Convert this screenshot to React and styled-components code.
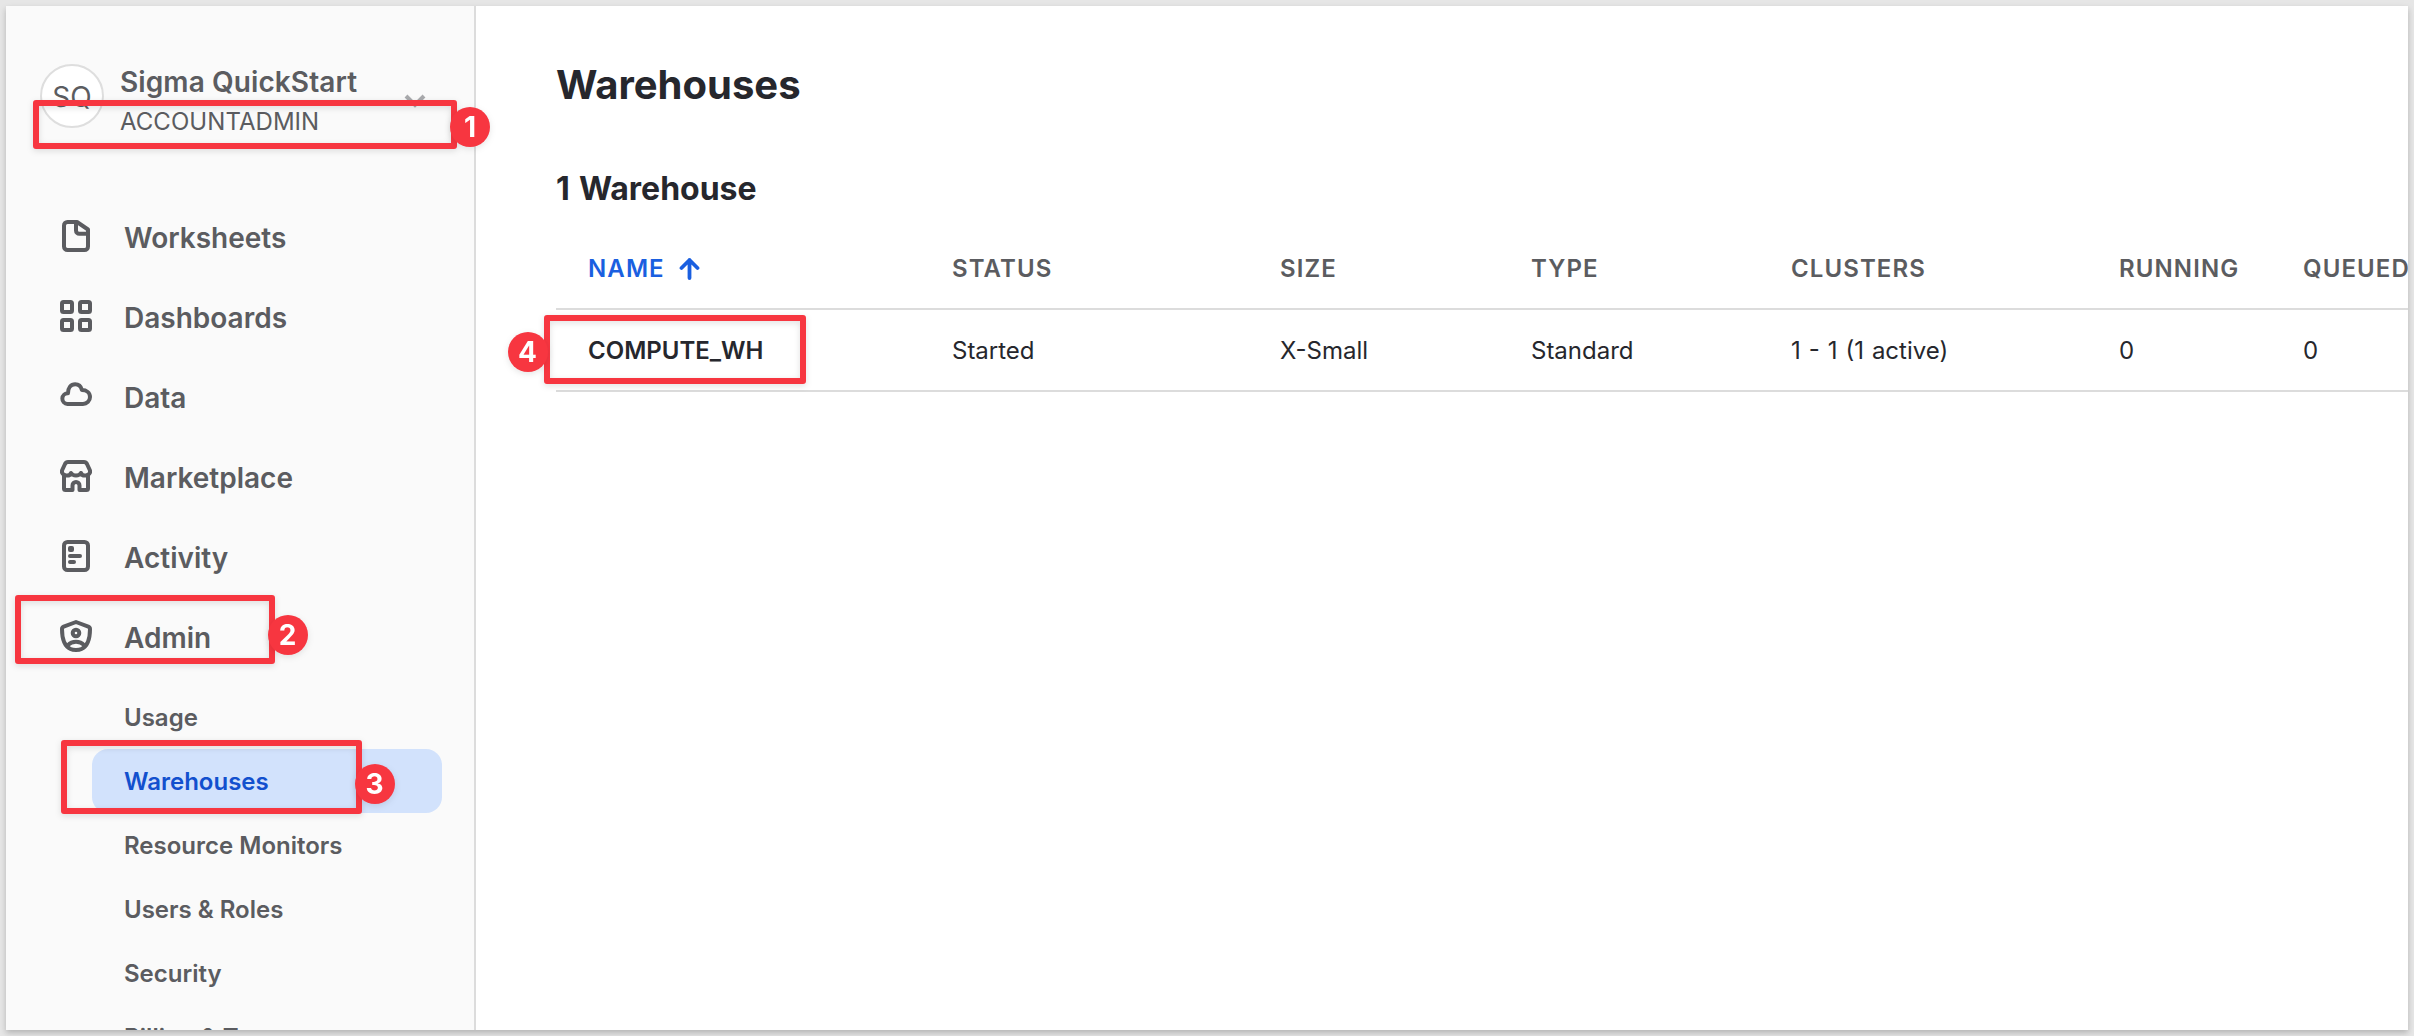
import React from "react";
import styled, { createGlobalStyle } from "styled-components";

const GlobalStyle = createGlobalStyle`
  * { box-sizing: border-box; }
  body { margin: 0; background: #e6e6e6; }
`;

const Stage = styled.div`
  position: relative;
  width: 2414px;
  height: 1036px;
  padding: 6px;
  overflow: hidden;
  background: #e6e6e6;
  font-family: Inter, "Liberation Sans", sans-serif;
`;

const Window = styled.div`
  display: flex;
  height: 1024px;
  overflow: hidden;
  background: #fff;
`;

const Shade = styled.div`
  height: 1024px;
  box-shadow: 0 3px 6px rgba(0, 0, 0, 0.22);
`;

const Sidebar = styled.aside`
  flex: none;
  width: 470px;
  height: 1024px;
  overflow: hidden;
  background: #fafafa;
  border-right: 2px solid #dcdcdc;
`;

const Account = styled.div`
  display: flex;
  align-items: center;
  height: 64px;
  margin: 58px 48px 0 34px;
`;

const Avatar = styled.div`
  display: flex;
  align-items: center;
  justify-content: center;
  width: 64px;
  height: 64px;
  padding-top: 2px;
  border: 2px solid #dedede;
  border-radius: 50%;
  background: #fff;
  color: #5b5c60;
  font-size: 28px;
`;

const AccountText = styled.div`
  flex: 1;
  margin-left: 16px;
  padding-top: 12px;
  color: #5b5c60;
  white-space: nowrap;
`;

const AccountName = styled.div`
  font-size: 28px;
  line-height: 40px;
  font-weight: 600;
  letter-spacing: 0.1px;
`;

const AccountRole = styled.div`
  font-size: 24px;
  line-height: 40px;
  letter-spacing: 0.05px;
`;

const Nav = styled.nav`
  display: flex;
  flex-direction: column;
  padding-top: 69px;
`;

const NavItem = styled.div`
  display: flex;
  align-items: center;
  gap: 32px;
  height: 80px;
  padding: 1px 0 0 54px;
  color: #5b5c60;
  font-size: 28px;
  line-height: 36px;
  font-weight: 600;

  svg { margin-top: -3px; }
`;

const SubNav = styled.div`
  display: flex;
  flex-direction: column;
  margin: 8px 32px 0 86px;
`;

const SubItem = styled.div`
  flex: none;
  height: 64px;
  padding-left: 32px;
  border-radius: 16px;
  background: ${(p) => (p.$active ? "#d2e2fc" : "transparent")};
  color: ${(p) => (p.$active ? "#1250ce" : "#5b5c60")};
  font-size: 24px;
  line-height: 66px;
  font-weight: 600;
  white-space: nowrap;
`;

const Main = styled.main`
  flex: 1;
  min-width: 0;
  overflow: hidden;
  padding-left: 80px;
  color: #26272d;
`;

const Title = styled.h1`
  margin: 54px 0 0;
  font-size: 40px;
  line-height: 50px;
  font-weight: 700;
`;

const Subtitle = styled.h2`
  margin: 59px 0 0;
  font-size: 32px;
  line-height: 40px;
  font-weight: 700;
  word-spacing: 1.5px;
`;

const Row = styled.div`
  display: grid;
  grid-template-columns: 364px 328px 251px 260px 328px 184px 200px;
  align-items: center;
  width: 1948px;
  height: ${(p) => p.$height}px;
  padding: ${(p) => p.$top}px 0 0 32px;
  border-bottom: 2px solid #dcdcdc;
  white-space: nowrap;
`;

const HeadCell = styled.div`
  display: flex;
  align-items: center;
  gap: 14px;
  color: ${(p) => (p.$sorted ? "#1a5fe0" : "#5b5c60")};
  font-size: 24px;
  line-height: 32px;
  font-weight: 600;
  letter-spacing: 1.1px;
`;

const Cell = styled.div`
  font-size: 24px;
  line-height: 32px;
  font-weight: ${(p) => (p.$strong ? 600 : 400)};
  word-spacing: 1.2px;
`;

const HighlightBox = styled.div`
  position: absolute;
  left: ${(p) => p.$x}px;
  top: ${(p) => p.$y}px;
  width: ${(p) => p.$w}px;
  height: ${(p) => p.$h}px;
  border: 6px solid #f73640;
  border-radius: 3px;
  filter: drop-shadow(0 2px 3px rgba(0, 0, 0, 0.12));
`;

const StepBadge = styled.div`
  position: absolute;
  left: ${(p) => p.$x}px;
  top: ${(p) => p.$y}px;
  display: flex;
  align-items: center;
  justify-content: center;
  width: 40px;
  height: 40px;
  border-radius: 50%;
  background: #f73640;
  color: #fff;
  font-size: 28px;
  line-height: 40px;
  font-weight: 700;
  filter: drop-shadow(0 2px 3px rgba(0, 0, 0, 0.1));
`;

const Icon = ({ children }) => (
  <svg width="32" height="32" viewBox="0 0 32 32" fill="none" stroke="currentColor"
    strokeWidth="4" strokeLinecap="round" strokeLinejoin="round">
    {children}
  </svg>
);

const FileIcon = () => (
  <Icon>
    <path d="M7.5 2H17L28 9.5V26.5A3.5 3.5 0 0 1 24.5 30H7.5A3.5 3.5 0 0 1 4 26.5V5.5A3.5 3.5 0 0 1 7.5 2Z" />
    <path d="M16 3V10.5A3.3 3.3 0 0 0 19.3 13.8H27" />
  </Icon>
);

const GridIcon = () => (
  <Icon>
    <rect x="2" y="2" width="10" height="10" rx="1.5" />
    <rect x="20" y="2" width="10" height="10" rx="1.5" />
    <rect x="2" y="20" width="10" height="10" rx="1.5" />
    <rect x="20" y="20" width="10" height="10" rx="1.5" />
  </Icon>
);

const CloudIcon = () => (
  <Icon>
    <path d="M7.5 24A5.4 5.4 0 0 1 8 13.2C8 8 10.8 4.3 15.2 4.3C18.7 4.3 21 6.6 21.9 10C26.5 10 30 12.8 30 17A7 7 0 0 1 23 24Z" />
  </Icon>
);

const StoreIcon = () => (
  <Icon>
    <path d="M8 2H24Q26 2 27 4L30 10.5V12.5Q29 15 26 15.5Q22 16 21 13Q19.5 15.5 16 15.5Q12.5 15.5 11 13Q10 16 6 15.5Q3 15 2 12.5V10.5L5 4Q6 2 8 2Z" />
    <path d="M4 15V28.5Q4 30 5.5 30H12.5V25.5A3.5 3.5 0 0 1 19.5 25.5V30H26.5Q28 30 28 28.5V15" />
  </Icon>
);

const ActivityIcon = () => (
  <Icon>
    <rect x="4" y="2" width="24" height="28" rx="3.5" />
    <rect x="8" y="6" width="6" height="6" rx="2" fill="currentColor" stroke="none" />
    <path d="M10 16H20M10 22H14" />
  </Icon>
);

const ShieldIcon = () => (
  <Icon>
    <path d="M16 2L28.3 6.6Q30 7.3 30 9C30 19 27 26.5 21.5 29Q19.5 30 16 30T10.5 29C5 26.5 2 19 2 9Q2 7.3 3.7 6.6Z" />
    <circle cx="16" cy="13" r="3.3" />
    <path d="M8 25C10 22.8 12.8 21.8 16 21.8S22 22.8 24 25" />
  </Icon>
);

const Chevron = styled.svg`
  margin-top: 10px;
`;

const ChevronIcon = () => (
  <Chevron width="22" height="14" viewBox="0 0 22 14" fill="none" stroke="#a9aaad" strokeWidth="4">
    <path d="M2 2L11 11L20 2" />
  </Chevron>
);

const SortArrow = () => (
  <svg width="21" height="24" viewBox="0 0 21 24" fill="none" stroke="currentColor"
    strokeWidth="3.8" strokeLinecap="round" strokeLinejoin="round">
    <path d="M10.5 21V3M2.5 11L10.5 3L18.5 11" />
  </svg>
);

const navItems = [
  ["Worksheets", FileIcon],
  ["Dashboards", GridIcon],
  ["Data", CloudIcon],
  ["Marketplace", StoreIcon],
  ["Activity", ActivityIcon],
  ["Admin", ShieldIcon],
];

const subItems = ["Usage", "Warehouses", "Resource Monitors", "Users & Roles", "Security", "Billing & Terms"];

const columns = ["NAME", "STATUS", "SIZE", "TYPE", "CLUSTERS", "RUNNING", "QUEUED"];
const warehouse = ["COMPUTE_WH", "Started", "X-Small", "Standard", "1 - 1 (1 active)", "0", "0"];

const steps = [
  { box: [33, 100, 424, 49], badge: [450, 107] },
  { box: [15, 595, 260, 69], badge: [267.5, 614.5] },
  { box: [61, 739.5, 301, 74], badge: [354.5, 764] },
  { box: [544, 315, 262, 69], badge: [507.5, 332] },
];

export default function App() {
  return (
    <Stage>
      <GlobalStyle />
      <Shade>
        <Window>
          <Sidebar>
            <Account>
              <Avatar>SQ</Avatar>
              <AccountText>
                <AccountName>Sigma QuickStart</AccountName>
                <AccountRole>ACCOUNTADMIN</AccountRole>
              </AccountText>
              <ChevronIcon />
            </Account>
            <Nav>
              {navItems.map(([label, Glyph]) => (
                <NavItem key={label}>
                  <Glyph />
                  {label}
                </NavItem>
              ))}
              <SubNav>
                {subItems.map((label) => (
                  <SubItem key={label} $active={label === "Warehouses"}>{label}</SubItem>
                ))}
              </SubNav>
            </Nav>
          </Sidebar>
          <Main>
            <Title>Warehouses</Title>
            <Subtitle>1 Warehouse</Subtitle>
            <Row $height={101} $top={21}>
              {columns.map((name, i) => (
                <HeadCell key={name} $sorted={i === 0}>
                  {name}
                  {i === 0 && <SortArrow />}
                </HeadCell>
              ))}
            </Row>
            <Row $height={82} $top={2}>
              {warehouse.map((value, i) => (
                <Cell key={columns[i]} $strong={i === 0}>{value}</Cell>
              ))}
            </Row>
          </Main>
        </Window>
      </Shade>
      {steps.map(({ box: [x, y, w, h] }, i) => (
        <HighlightBox key={i} $x={x} $y={y} $w={w} $h={h} />
      ))}
      {steps.map(({ badge: [x, y] }, i) => (
        <StepBadge key={i} $x={x} $y={y}>{i + 1}</StepBadge>
      ))}
    </Stage>
  );
}
